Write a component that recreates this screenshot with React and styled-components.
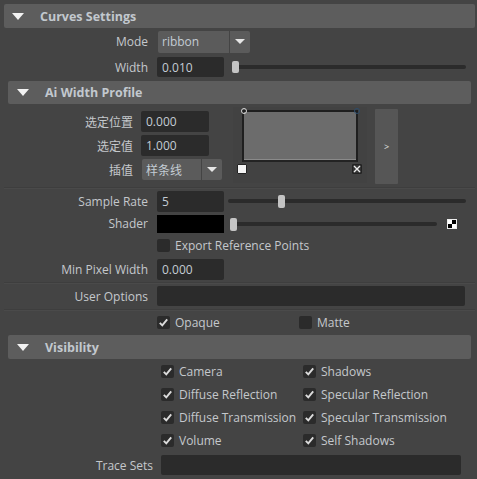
import styled, { createGlobalStyle } from "styled-components";

const Global = createGlobalStyle`
    body {
        margin: 0;
        background: #444444;
    }
`

const Root = styled.div`
    width: 477px;
    height: 479px;
    overflow: hidden;
    background: #444444;
    font-family: "Open Sans", "Noto Sans CJK SC", sans-serif;
    font-size: 12px;
    color: #c4c8cc;
    padding-top: 4px;
    box-sizing: border-box;
`

const Frame = styled.div`
    display: flex;
    flex-direction: column;
    margin: ${p => p.$nested ? "0 4px" : "0 2px 0 4px"};
    margin-top: ${p => p.$top || 0}px;
`

const Header = styled.div`
    height: ${p => p.$h || 24}px;
    background: #5d5d5d;
    border-radius: 2px;
    display: flex;
    align-items: center;
    font-weight: bold;
    font-size: 12.5px;
    color: #c2c8ce;
    padding-left: ${p => p.$nested ? 9 : 8}px;
`

const Triangle = styled.div`
    width: 0;
    height: 0;
    border-left: 6.5px solid transparent;
    border-right: 6.5px solid transparent;
    border-top: 7px solid #f2f2f2;
    margin-right: 16px;
`

const Row = styled.div`
    height: ${p => p.$h}px;
    display: flex;
    align-items: center;
`

const Label = styled.div`
    width: ${p => p.$w}px;
    flex: none;
    text-align: right;
    margin-right: ${p => p.$gap || 9}px;
    white-space: nowrap;
`

const Field = styled.div`
    width: ${p => p.$w}px;
    height: ${p => p.$h || 21}px;
    flex: none;
    background: #2b2b2b;
    border-radius: 2px;
    box-sizing: border-box;
    padding-left: 5px;
    display: flex;
    align-items: center;
    color: #c4ccd4;
`

const Dropdown = styled.div`
    width: ${p => p.$w}px;
    height: ${p => p.$h}px;
    flex: none;
    display: flex;
    gap: 1px;
`

const DropMain = styled.div`
    flex: 1;
    background: #5b5b5b;
    border-radius: 2px 0 0 2px;
    display: flex;
    align-items: center;
    padding-left: 4px;
    color: #c4ccd4;
`

const DropArrow = styled.div`
    width: 20px;
    background: #5b5b5b;
    border-radius: 0 2px 2px 0;
    display: flex;
    align-items: center;
    justify-content: center;

    &::after {
        content: "";
        border-left: 5px solid transparent;
        border-right: 5px solid transparent;
        border-top: 5px solid #e6e6e6;
    }
`

const Slider = styled.div`
    position: relative;
    height: 12px;
    flex: none;
    width: ${p => p.$w}px;
    margin-left: ${p => p.$ml || 0}px;
    display: flex;
    align-items: center;

    &::before {
        content: "";
        width: 100%;
        height: 4px;
        border-radius: 2px;
        background: #2b2b2b;
    }
`

const Thumb = styled.div`
    position: absolute;
    top: ${p => p.$top || 0}px;
    left: ${p => p.$x}px;
    width: 7px;
    height: ${p => p.$h || 12}px;
    background: #c4c4c4;
    border-radius: 2px;
`

const Sep = styled.div`
    height: 2px;
    margin: ${p => p.$m || "0"};
    border-top: 1px solid #3e3e3e;
    background: #4a4a4a;
    box-sizing: border-box;
`

const Box = styled.div`
    width: 13px;
    height: 13px;
    flex: none;
    background: #2b2b2b;
    border-radius: 2px;
    display: flex;
    align-items: center;
    justify-content: center;
    margin-right: 5px;
`

const CheckItem = styled.div`
    display: flex;
    align-items: center;
    width: ${p => p.$w || "auto"};
    flex: none;
    white-space: nowrap;
`

const AiBody = styled.div`
    display: flex;
    height: 82px;
    padding-top: 3px;
    box-sizing: border-box;
`

const AiLeft = styled.div`
    width: 214px;
    flex: none;
    display: flex;
    flex-direction: column;
    gap: 3px;
    padding-top: 4px;
`

const Ramp = styled.div`
    width: 134px;
    height: 76px;
    margin-left: 11px;
    background: #424242;
    position: relative;
    flex: none;
`

const RampGraph = styled.div`
    position: absolute;
    left: 9px;
    top: 3px;
    width: 116px;
    height: 52px;
    box-sizing: border-box;
    border: 2px solid #1f1f1f;
    border-bottom-color: #232323;
    background: #6c6c6c;
    box-shadow: inset 0 -1px 0 #8a8a8a;
`

const Handle = styled.div`
    position: absolute;
    top: -4px;
    left: ${p => p.$x}px;
    width: 6px;
    height: 6px;
    border-radius: 50%;
    box-sizing: border-box;
    border: 1.5px solid ${p => p.$c};
`

const Swatch = styled.div`
    position: absolute;
    top: 57px;
    left: ${p => p.$x}px;
    width: 10px;
    height: 10px;
    box-sizing: border-box;
    background: ${p => p.$bg};
    border: 1px solid #222;
    border-radius: 1px;
`

const SideButton = styled.div`
    width: 23px;
    height: 75px;
    margin-top: 2px;
    margin-left: 8px;
    background: #565656;
    border-radius: 1px;
    display: flex;
    align-items: center;
    justify-content: center;
    font-size: 9px;
    color: #e0e0e0;
`

const ShaderSwatch = styled.div`
    width: 67px;
    height: 18px;
    flex: none;
    background: #000;
`

const Checker = styled.div`
    width: 10px;
    height: 10px;
    flex: none;
    margin-left: 10px;
    border: 1px solid #eee;
    background: conic-gradient(#000 0 25%, #fff 0 50%, #000 0 75%, #fff 0);
    box-sizing: border-box;
`

const VisBody = styled.div`
    display: flex;
    flex-direction: column;
    padding-top: 1px;
`

const Check = ({ on }) => (
    <Box>
        {on && (
            <svg width="11" height="11" viewBox="0 0 11 11">
                <path d="M1.8 5.8 L4.3 8.4 L9.2 2.4" fill="none" stroke="#dcdcdc" strokeWidth="1.9" />
            </svg>
        )}
    </Box>
)

const visRows = [
    ["Camera", "Shadows"],
    ["Diffuse Reflection", "Specular Reflection"],
    ["Diffuse Transmission", "Specular Transmission"],
    ["Volume", "Self Shadows"],
]

const App = () => {
    return (
        <Root>
            <Global />
            <Frame>
                <Header>
                    <Triangle />Curves Settings
                </Header>
                <Row $h={27}>
                    <Label $w={144}>Mode</Label>
                    <Dropdown $w={92} $h={22} style={{ marginLeft: 1 }}>
                        <DropMain>ribbon</DropMain>
                        <DropArrow />
                    </Dropdown>
                </Row>
                <Row $h={24}>
                    <Label $w={144}>Width</Label>
                    <Field $w={67} $h={20}>0.010</Field>
                    <Slider $w={234} $ml={8}>
                        <Thumb $x={0} />
                    </Slider>
                </Row>

                <Frame $nested $top={2}>
                    <Header $h={23} $nested>
                        <Triangle />Ai Width Profile
                    </Header>
                    <AiBody>
                        <AiLeft>
                            <Row $h={21}>
                                <Label $w={125} $gap={8}>选定位置</Label>
                                <Field $w={68}>0.000</Field>
                            </Row>
                            <Row $h={21}>
                                <Label $w={125} $gap={8}>选定值</Label>
                                <Field $w={68}>1.000</Field>
                            </Row>
                            <Row $h={21}>
                                <Label $w={125} $gap={9}>插值</Label>
                                <Dropdown $w={80} $h={21}>
                                    <DropMain>样条线</DropMain>
                                    <DropArrow />
                                </Dropdown>
                            </Row>
                        </AiLeft>
                        <Ramp>
                            <RampGraph>
                                <Handle $x={-3} $c="#d8d8d8" />
                                <Handle $x={110} $c="#2c4c6c" />
                            </RampGraph>
                            <Swatch $x={4} $bg="#f4f4f4" />
                            <Swatch $x={119} $bg="#333">
                                <svg width="8" height="8" viewBox="0 0 8 8" style={{ display: "block" }}>
                                    <path d="M1 1 L7 7 M7 1 L1 7" stroke="#eee" strokeWidth="1.4" />
                                </svg>
                            </Swatch>
                        </Ramp>
                        <SideButton>&gt;</SideButton>
                    </AiBody>
                </Frame>

                <Sep $m="1px 0 0 0" />
                <Row $h={24}>
                    <Label $w={144}>Sample Rate</Label>
                    <Field $w={67}>5</Field>
                    <Slider $w={238} $ml={4}>
                        <Thumb $x={50} $h={13} />
                    </Slider>
                </Row>
                <Row $h={21}>
                    <Label $w={144}>Shader</Label>
                    <ShaderSwatch />
                    <Slider $w={207} $ml={6}>
                        <Thumb $x={0} $h={13} />
                    </Slider>
                    <Checker />
                </Row>
                <Row $h={23}>
                    <Label $w={144} />
                    <CheckItem>
                        <Check />Export Reference Points
                    </CheckItem>
                </Row>
                <Row $h={25}>
                    <Label $w={144}>Min Pixel Width</Label>
                    <Field $w={67}>0.000</Field>
                </Row>
                <Sep />
                <Row $h={24}>
                    <Label $w={144}>User Options</Label>
                    <Field $w={308} $h={20} />
                </Row>
                <Sep $m="1px 0 0 0" />
                <Row $h={22}>
                    <Label $w={144} />
                    <CheckItem $w="142px">
                        <Check on />Opaque
                    </CheckItem>
                    <CheckItem>
                        <Check />Matte
                    </CheckItem>
                </Row>

                <Frame $nested $top={2}>
                    <Header $nested>
                        <Triangle />Visibility
                    </Header>
                    <VisBody>
                        {visRows.map(([a, b]) => (
                            <Row $h={23} key={a}>
                                <Label $w={145} $gap={8} />
                                <CheckItem $w="142px">
                                    <Check on />{a}
                                </CheckItem>
                                <CheckItem>
                                    <Check on />{b}
                                </CheckItem>
                            </Row>
                        ))}
                        <Row $h={26}>
                            <Label $w={145} $gap={8}>Trace Sets</Label>
                            <Field $w={300} $h={20} />
                        </Row>
                    </VisBody>
                </Frame>
            </Frame>
        </Root>
    )
}

export default App;
